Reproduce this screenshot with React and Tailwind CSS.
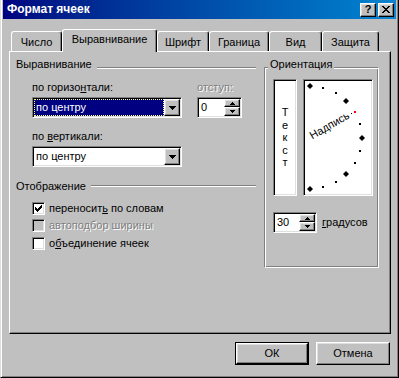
import React from "react";

const raised =
  "border border-t-white border-l-white border-r-black border-b-black shadow-[inset_-1px_-1px_#808080,inset_1px_1px_#dfdfdf]";
const sunken =
  "border border-t-[#808080] border-l-[#808080] border-r-white border-b-white shadow-[inset_1px_1px_#000,inset_-1px_-1px_#dfdfdf]";
const grayText = "text-[#808080] [text-shadow:1px_1px_0_#fff]";

// tiny bitmap glyphs, one string per pixel row
const Pixels = ({ rows, color = "#000" }) => (
  <svg
    width={rows[0].length}
    height={rows.length}
    viewBox={`0 0 ${rows[0].length} ${rows.length}`}
    shapeRendering="crispEdges"
    className="block"
  >
    {rows.map((r, y) =>
      r.split("").map((c, x) =>
        c === "#" ? <rect key={x + "-" + y} x={x} y={y} width="1" height="1" fill={color} /> : null
      )
    )}
  </svg>
);

const CHECK = ["......#", ".....##", "#...###", "##.###.", "#####..", ".###...", "..#...."];
const CLOSE = ["##....##", ".##..##.", "..####..", "...##...", "..####..", ".##..##.", "##....##"];
const DOWN = ["#######", ".#####.", "..###..", "...#..."];
const SPIN_UP = ["..#..", ".###.", "#####"];
const SPIN_DOWN = ["#####", ".###.", "..#.."];

const CaptionBtn = ({ children, className = "" }) => (
  <div className={`flex h-[14px] w-[16px] items-center justify-center bg-[#c0c0c0] ${raised} ${className}`}>
    {children}
  </div>
);

const Combo = ({ selected }) => (
  <div className={`flex h-[21px] w-[150px] bg-white p-[1px] ${sunken}`}>
    {selected ? (
      <div className="flex flex-1 items-center border border-dotted border-[#ffff80] bg-[#000080] pl-[1px] text-white">
        по центру
      </div>
    ) : (
      <div className="flex flex-1 items-center pl-[2px]">по центру</div>
    )}
    <div className={`flex w-[16px] items-center justify-center bg-[#c0c0c0] ${raised}`}>
      <Pixels rows={DOWN} />
    </div>
  </div>
);

const Spin = ({ value, w }) => (
  <div className={`flex h-[21px] ${w} bg-white p-[1px] ${sunken}`}>
    <div className="flex flex-1 items-center pl-[2px]">{value}</div>
    <div className="flex w-[16px] flex-col">
      <div className={`flex h-[8px] items-center justify-center bg-[#c0c0c0] ${raised}`}>
        <Pixels rows={SPIN_UP} />
      </div>
      <div className={`flex h-[9px] items-center justify-center bg-[#c0c0c0] ${raised}`}>
        <Pixels rows={SPIN_DOWN} />
      </div>
    </div>
  </div>
);

const CheckBox = ({ checked, disabled }) => (
  <div
    className={`flex h-[13px] w-[13px] items-center justify-center ${sunken} ${
      disabled ? "bg-[#c0c0c0]" : "bg-white"
    }`}
  >
    {checked && <Pixels rows={CHECK} />}
  </div>
);

const GroupHeader = ({ label, lineTop }) => (
  <div className="flex h-[13px]">
    <span>{label}</span>
    <div className={`ml-[5px] h-[2px] flex-1 border-t border-b border-t-[#808080] border-b-white ${lineTop}`} />
  </div>
);

const Dial = () => {
  const cx = 310;
  const cy = 137.5;
  const r = 51.5;
  const marks = [];
  for (let a = -90; a <= 90; a += 15) {
    const x = Math.round(cx + r * Math.cos((a * Math.PI) / 180));
    const y = Math.round(cy - r * Math.sin((a * Math.PI) / 180));
    if (a % 45 === 0) {
      marks.push(
        <polygon key={a} points={`${x},${y - 3} ${x + 3},${y} ${x},${y + 3} ${x - 3},${y}`} fill="#000" />
      );
    } else {
      marks.push(
        <rect key={a} x={x - 1} y={y - 1} width="2" height="2" fill={a === 30 ? "#ff0000" : "#000"} />
      );
    }
  }
  return (
    <svg width="68" height="115" viewBox="304 80 68 115" className="block">
      {marks}
      <rect x="351" y="113" width="1" height="1" fill="#000" shapeRendering="crispEdges" />
      <text
        x={cx + 1}
        y={cy + 3}
        transform={`rotate(-30 ${cx} ${cy})`}
        fontSize="11"
        fontFamily="Liberation Sans, Arial, sans-serif"
        fill="#000"
      >
        Надпись
      </text>
    </svg>
  );
};

const tabs = [
  { label: "Число", cls: "w-[51px]" },
  { label: "Выравнивание", cls: "w-[95px]", active: true },
  { label: "Шрифт", cls: "w-[52px]" },
  { label: "Граница", cls: "w-[60px]" },
  { label: "Вид", cls: "w-[53px]" },
  { label: "Защита", cls: "w-[57px]" },
];

export default function App() {
  return (
    <div className="h-[378px] w-[399px] overflow-hidden bg-[#c0c0c0] font-['Liberation_Sans',Arial,sans-serif] text-[11px] leading-[13px] text-black">
      <div className="flex h-full w-full flex-col border-r border-b border-l border-l-[#dfdfdf] border-r-black border-b-black shadow-[inset_1px_0_#fff,inset_-1px_-1px_#808080]">
        {/* title bar */}
        <div className="mx-[2px] flex h-[19px] items-center bg-linear-to-r from-[#000080] to-[#1084d0] pr-[2px] pl-[4px]">
          <span className="flex-1 text-[12px] font-bold text-white">Формат ячеек</span>
          <CaptionBtn>
            <span className="text-[11px] leading-[11px] font-bold">?</span>
          </CaptionBtn>
          <CaptionBtn className="ml-[2px]">
            <Pixels rows={CLOSE} />
          </CaptionBtn>
        </div>

        {/* tabs */}
        <div className="mt-[10px] flex h-[22px] items-end pl-[10px]">
          {tabs.map((t) =>
            t.active ? (
              <div
                key={t.label}
                className={`relative z-10 -mb-[1px] h-[23px] ${t.cls} rounded-t-[3px] border-t border-r border-l border-t-white border-r-black border-l-white bg-[#c0c0c0] pt-[3px] text-center shadow-[inset_-1px_0_#808080]`}
              >
                {t.label}
              </div>
            ) : (
              <div
                key={t.label}
                className={`h-[20px] ${t.cls} rounded-t-[3px] border-t border-r border-l border-t-white border-r-black border-l-white pt-[4px] text-center shadow-[inset_-1px_0_#808080]`}
              >
                {t.label}
              </div>
            )
          )}
        </div>

        {/* tab page */}
        <div className="ml-[8px] flex h-[283px] w-[382px] border border-t-white border-r-black border-b-black border-l-white pt-[6px] pl-[6px] shadow-[inset_-1px_-1px_#808080]">
          <div className="w-[240px]">
            <GroupHeader label="Выравнивание" lineTop="mt-[9px]" />
            <div className="mt-[10px] flex pl-[16px]">
              <span className="w-[165px]">
                по горизо<u>н</u>тали:
              </span>
              <span className={grayText}>отступ:</span>
            </div>
            <div className="mt-[3px] flex pl-[16px]">
              <Combo selected />
              <div className="ml-[15px]">
                <Spin value="0" w="w-[45px]" />
              </div>
            </div>
            <div className="mt-[12px] pl-[16px]">
              по <u>в</u>ертикали:
            </div>
            <div className="mt-[3px] pl-[16px]">
              <Combo />
            </div>

            <div className="mt-[13px]">
              <GroupHeader label="Отображение" lineTop="mt-[5px]" />
            </div>
            <div className="mt-[9px] flex h-[13px] items-center pl-[16px]">
              <CheckBox checked />
              <span className="ml-[4px]">
                переносит<u>ь</u> по словам
              </span>
            </div>
            <div className="mt-[4px] flex h-[13px] items-center pl-[16px]">
              <CheckBox disabled />
              <span className={`ml-[4px] ${grayText}`}>автоподбор ширины</span>
            </div>
            <div className="mt-[5px] flex h-[13px] items-center pl-[16px]">
              <CheckBox />
              <span className="ml-[4px]">
                о<u>б</u>ъединение ячеек
              </span>
            </div>
          </div>

          {/* orientation */}
          <div className="relative mt-[9px] ml-[8px] h-[201px] w-[115px] border border-t-[#808080] border-r-white border-b-white border-l-[#808080] pt-[11px] pl-[8px] shadow-[inset_1px_1px_#fff,inset_-1px_-1px_#808080]">
            <span className="absolute top-[-10px] left-[3px] bg-[#c0c0c0] px-[2px]">Ориентация</span>
            <div className="flex">
              <div className={`flex h-[117px] w-[24px] flex-col items-center justify-center bg-white leading-[12.5px] ${sunken}`}>
                <span>Т</span>
                <span>е</span>
                <span>к</span>
                <span>с</span>
                <span>т</span>
              </div>
              <div className={`ml-[6px] h-[117px] w-[70px] bg-white ${sunken}`}>
                <Dial />
              </div>
            </div>
            <div className="mt-[16px] flex items-center">
              <Spin value="30" w="w-[44px]" />
              <span className="ml-[5px]">
                <u>г</u>радусов
              </span>
            </div>
          </div>
        </div>

        {/* buttons */}
        <div className="mt-[8px] flex justify-end pr-[8px]">
          <div className="h-[23px] w-[74px] border border-black">
            <div className={`flex h-full w-full items-center justify-center ${raised}`}>ОК</div>
          </div>
          <div className={`ml-[7px] flex h-[23px] w-[74px] items-center justify-center ${raised}`}>Отмена</div>
        </div>
      </div>
    </div>
  );
}
